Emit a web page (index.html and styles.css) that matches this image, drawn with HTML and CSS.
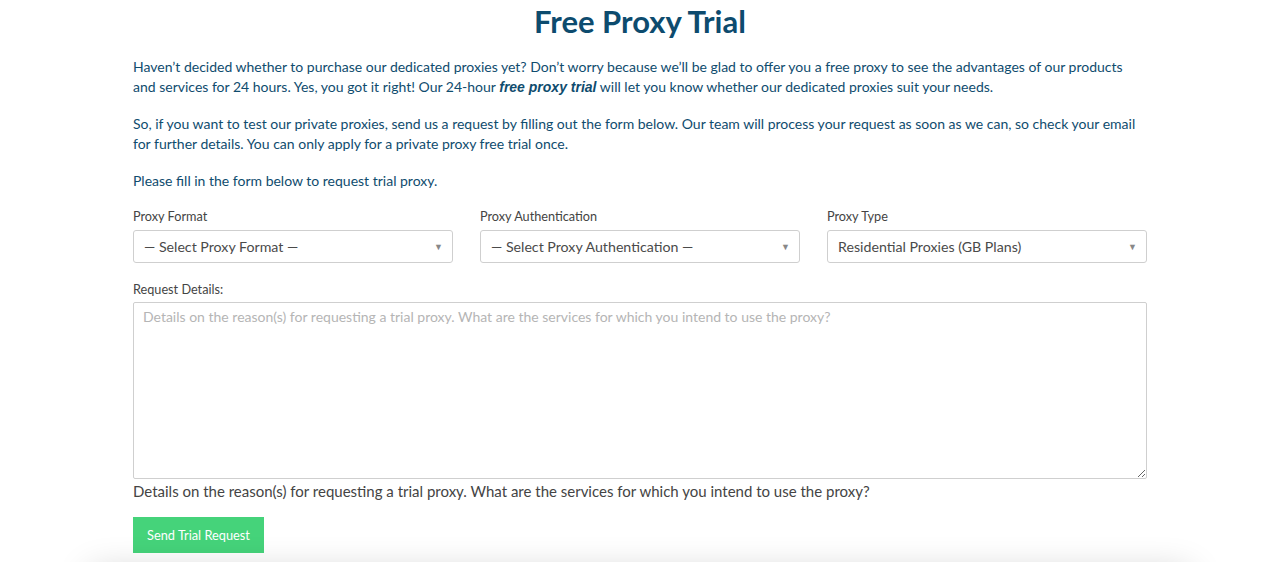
FILE: index.html
```html
<!DOCTYPE html>
<html lang="en">
<head>
<meta charset="utf-8">
<title>Free Proxy Trial</title>
<link rel="stylesheet" href="styles.css">
</head>
<body>
<main class="page">
  <h1 class="title">Free Proxy Trial</h1>
  <p class="lead">Haven’t decided whether to purchase our dedicated proxies yet? Don’t worry because we’ll be glad to offer you a free proxy to see the advantages of our products and services for 24 hours. Yes, you got it right! Our 24-hour <strong class="em">free proxy trial</strong> will let you know whether our dedicated proxies suit your needs.</p>
  <p class="lead">So, if you want to test our private proxies, send us a request by filling out the form below. Our team will process your request as soon as we can, so check your email for further details. You can only apply for a private proxy free trial once.</p>
  <p class="lead">Please fill in the form below to request trial proxy.</p>
  <form class="form">
    <div class="row">
      <div class="field">
        <label class="label">Proxy Format</label>
        <div class="select"><span>— Select Proxy Format —</span><span class="caret">▼</span></div>
      </div>
      <div class="field">
        <label class="label">Proxy Authentication</label>
        <div class="select"><span>— Select Proxy Authentication —</span><span class="caret">▼</span></div>
      </div>
      <div class="field">
        <label class="label">Proxy Type</label>
        <div class="select"><span>Residential Proxies (GB Plans)</span><span class="caret">▼</span></div>
      </div>
    </div>
    <div class="field details">
      <label class="label">Request Details:</label>
      <textarea class="textarea" placeholder="Details on the reason(s) for requesting a trial proxy. What are the services for which you intend to use the proxy?"></textarea>
      <div class="help">Details on the reason(s) for requesting a trial proxy. What are the services for which you intend to use the proxy?</div>
    </div>
    <button type="button" class="btn">Send Trial Request</button>
  </form>
</main>
<div class="next"></div>
</body>
</html>
```
FILE: styles.css
```css
html, body {
  margin: 0;
  padding: 0;
  background: #fff;
  overflow: hidden;
}
body {
  font-family: Lato, "Open Sans", Arial, sans-serif;
  color: #0f4c6e;
  height: 562px;
  position: relative;
}
.page {
  width: 1014px;
  margin: 0 auto;
  padding-top: 2px;
}
.title {
  margin: 0 0 17px;
  text-align: center;
  font-size: 31px;
  font-weight: 700;
  line-height: 38px;
  color: #0d4b6e;
}
.lead {
  margin: 0 0 17px;
  font-size: 14px;
  line-height: 20px;
}
.em {
  font-family: "Liberation Sans", Arial, sans-serif;
  font-style: italic;
  font-weight: 700;
  font-size: 14px;
  line-height: 1;
}
.form {
  margin-top: 17px;
}
.row {
  display: grid;
  grid-template-columns: repeat(3, 1fr);
  gap: 27px;
}
.field {
  display: flex;
  flex-direction: column;
}
.label {
  font-size: 12.7px;
  line-height: 16px;
  color: #444;
  margin-bottom: 6px;
}
.select {
  height: 33px;
  box-sizing: border-box;
  border: 1px solid #cfcfcf;
  border-radius: 3px;
  display: flex;
  align-items: center;
  justify-content: space-between;
  padding: 0 9px 0 10px;
  font-size: 14.2px;
  color: #4a4a4a;
}
.caret {
  font-size: 9px;
  color: #888;
}
.details {
  margin-top: 18px;
}
.details .label {
  margin-bottom: 5px;
}
.textarea {
  height: 177px;
  box-sizing: border-box;
  border: 1px solid #cfcfcf;
  border-radius: 2px;
  padding: 4px 9px;
  font-family: inherit;
  font-size: 14px;
  line-height: 20px;
  color: #444;
  resize: vertical;
}
.textarea::placeholder {
  color: #b5b5b5;
}
.help {
  font-size: 15px;
  line-height: 20px;
  color: #444;
  margin-top: 2px;
}
.btn {
  margin-top: 16px;
  height: 36px;
  width: 131px;
  border: 0;
  border-radius: 0;
  background: #45d37a;
  color: #fff;
  font-family: inherit;
  font-size: 12.8px;
  padding: 0;
}
.next {
  position: absolute;
  left: 90px;
  right: 90px;
  top: 572px;
  height: 40px;
  background: #fff;
  box-shadow: 0 0 36px rgba(0, 0, 0, 0.2);
}
```
